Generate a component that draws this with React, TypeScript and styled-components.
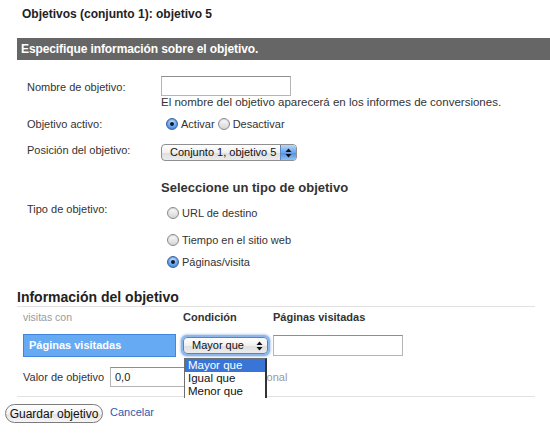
import React from "react";
import styled, { createGlobalStyle, css } from "styled-components";

const Global = createGlobalStyle`
  html, body { margin: 0; padding: 0; background: #fff; }
  body { font-family: "Liberation Sans", Arial, Helvetica, sans-serif; color: #333; font-size: 11px; }
  * { box-sizing: border-box; }
`;

const Page = styled.div`
  width: 550px;
  height: 433px;
  overflow: hidden;
  padding-top: 6px;
`;

const Title = styled.h2`
  margin: 0 0 0 22px;
  font-size: 12px;
  line-height: 16px;
  font-weight: bold;
  color: #222;
`;

const Bar = styled.div`
  margin: 16px 0 0 17px;
  height: 22px;
  line-height: 22px;
  background: #666;
  color: #fff;
  font-weight: bold;
  font-size: 12px;
  padding-left: 4px;
  letter-spacing: -0.1px;
`;

const FieldRow = styled.div<{ $mt: number }>`
  display: flex;
  align-items: flex-start;
  margin: ${(p) => p.$mt}px 0 0 27px;
`;

const Label = styled.div<{ $pt?: number }>`
  width: 134px;
  flex: none;
  line-height: 14px;
  padding-top: ${(p) => p.$pt ?? 0}px;
  font-size: 11px;
  color: #333;
`;

const Content = styled.div`
  display: flex;
  flex-direction: column;
  align-items: flex-start;
`;

const TextInput = styled.div<{ $w: number; $h?: number }>`
  width: ${(p) => p.$w}px;
  height: ${(p) => p.$h ?? 20}px;
  border: 1px solid #b5b5b5;
  border-top-color: #8e8e8e;
  background: #fff;
  font-size: 11px;
  line-height: 18px;
  padding-left: 4px;
  color: #222;
`;

const Hint = styled.div`
  line-height: 12px;
  font-size: 11.5px;
  color: #333;
`;

const RadioLine = styled.div<{ $mt?: number; $ml?: number }>`
  display: flex;
  align-items: center;
  margin-top: ${(p) => p.$mt ?? 0}px;
  margin-left: ${(p) => p.$ml ?? 0}px;
  line-height: 14px;
  font-size: 11px;
  color: #333;
`;

const RadioItem = styled.label`
  display: inline-flex;
  align-items: center;
  margin-right: 3px;
`;

const RadioDot = styled.span<{ $on?: boolean }>`
  display: inline-block;
  position: relative;
  width: 12px;
  height: 12px;
  border-radius: 50%;
  margin-right: 3px;
  border: 1px solid #8a8a8a;
  background: linear-gradient(#fdfdfd, #d4d4d4);
  box-shadow: inset 0 1px 1px rgba(0, 0, 0, 0.15);
  ${(p) =>
    p.$on &&
    css`
      border-color: #3a62a0;
      background: radial-gradient(circle at 50% 30%, #c8e0fb, #6aa6ea 55%, #2f72cf);
      &::after {
        content: "";
        position: absolute;
        left: 3px;
        top: 3px;
        width: 4px;
        height: 4px;
        border-radius: 50%;
        background: #0d1c33;
      }
    `}
`;

const SelectBox = styled.div<{ $w: number; $focus?: boolean; $mt?: number }>`
  position: relative;
  display: flex;
  align-items: center;
  width: ${(p) => p.$w}px;
  height: 17px;
  margin-top: ${(p) => p.$mt ?? 0}px;
  border: 1px solid #8f8f8f;
  border-radius: 4px;
  background: linear-gradient(#ffffff, #f0f0f0 50%, #dedede 51%, #ececec);
  font-size: 11px;
  color: #111;
  ${(p) =>
    p.$focus &&
    css`
      box-shadow: 0 0 0 2px #8db6ea, 0 0 2px 3px rgba(120, 165, 230, 0.5);
      border-color: #5b82bb;
    `}
`;

const SelectText = styled.span`
  flex: 1;
  padding-left: 8px;
  line-height: 15px;
  white-space: nowrap;
`;

const SelectArrows = styled.span<{ $blue?: boolean }>`
  width: 16px;
  height: 15px;
  flex: none;
  display: flex;
  align-items: center;
  justify-content: center;
  border-radius: 0 3px 3px 0;
  border-left: 1px solid ${(p) => (p.$blue ? "#5d87c4" : "transparent")};
  background: ${(p) =>
    p.$blue ? "linear-gradient(#b9d6f8, #6ba5ec 50%, #4a8ee6 51%, #8ec1f5)" : "transparent"};
`;

const SectionHeading = styled.div`
  margin: 19px 0 0 161px;
  font-size: 13px;
  line-height: 16px;
  font-weight: bold;
  color: #333;
`;

const InfoHeading = styled.div`
  margin: 20px 15px 0 17px;
  font-size: 14px;
  line-height: 17px;
  font-weight: bold;
  color: #222;
  border-bottom: 1px solid #e2e2e2;
`;

const CondGrid = styled.div`
  display: grid;
  grid-template-columns: 160px 90px 1fr;
  margin: 3px 0 0 23px;
  align-items: center;
`;

const ColHead = styled.div<{ $muted?: boolean }>`
  line-height: 14px;
  font-size: ${(p) => (p.$muted ? 10.5 : 11)}px;
  font-weight: ${(p) => (p.$muted ? "normal" : "bold")};
  color: ${(p) => (p.$muted ? "#9a9a9a" : "#333")};
`;

const MetricBox = styled.div`
  margin-top: 10px;
  width: 153px;
  height: 23px;
  line-height: 21px;
  background: #66aaf3;
  border: 1px solid #3f86dc;
  color: #fff;
  font-weight: bold;
  font-size: 11px;
  padding-left: 5px;
`;

const CellWrap = styled.div`
  margin-top: 10px;
  position: relative;
`;

const Dropdown = styled.ul`
  position: absolute;
  left: 1px;
  top: 21px;
  width: 83px;
  height: 40px;
  margin: 0;
  padding: 0;
  list-style: none;
  background: #fff;
  border: 1px solid #6f6f6f;
  border-bottom: none;
  border-right: 2px solid #333;
  overflow: hidden;
  z-index: 2;
  font-size: 11.5px;
`;

const DropItem = styled.li<{ $active?: boolean }>`
  height: 13px;
  line-height: 13px;
  padding-left: 3px;
  color: ${(p) => (p.$active ? "#fff" : "#111")};
  background: ${(p) => (p.$active ? "#3875d7" : "transparent")};
`;

const ValueRow = styled.div`
  display: flex;
  align-items: center;
  margin: 10px 15px 0 23px;
  padding-bottom: 9px;
`;

const ValueLabel = styled.span`
  width: 87px;
  font-size: 11px;
  color: #333;
`;

const Optional = styled.span`
  margin-left: 44px;
  font-size: 11px;
  color: #999;
`;

const Divider = styled.div`
  margin: 0 15px 0 17px;
  border-top: 1px solid #e2e2e2;
`;

const Actions = styled.div`
  display: flex;
  align-items: center;
  margin: 7px 0 0 5px;
`;

const SaveButton = styled.button`
  width: 98px;
  height: 19px;
  padding: 0;
  border: 1px solid #7b7b7b;
  border-radius: 10px;
  background: linear-gradient(#ffffff, #f3f3f3 50%, #e2e2e2 51%, #f6f6f6);
  font-family: "Liberation Sans", Arial, sans-serif;
  font-size: 12px;
  color: #111;
`;

const CancelLink = styled.a`
  margin-left: 7px;
  margin-top: -3px;
  font-size: 11px;
  color: #2a5db0;
  text-decoration: none;
`;

const Arrows = ({ color = "#111" }: { color?: string }) => (
  <svg width="7" height="10" viewBox="0 0 7 10">
    <path d="M3.5 0.5 L6.5 4 L0.5 4 Z" fill={color} />
    <path d="M3.5 9.5 L6.5 6 L0.5 6 Z" fill={color} />
  </svg>
);

export default function App() {
  return (
    <>
      <Global />
      <Page>
        <Title>Objetivos (conjunto 1): objetivo 5</Title>
        <Bar>Especifique información sobre el objetivo.</Bar>

        <FieldRow $mt={16}>
          <Label $pt={4}>Nombre de objetivo:</Label>
          <Content>
            <TextInput $w={130} />
            <Hint>El nombre del objetivo aparecerá en los informes de conversiones.</Hint>
          </Content>
        </FieldRow>

        <FieldRow $mt={9}>
          <Label>Objetivo activo:</Label>
          <RadioLine $ml={5}>
            <RadioItem>
              <RadioDot $on />
              Activar
            </RadioItem>
            <RadioItem>
              <RadioDot />
              Desactivar
            </RadioItem>
          </RadioLine>
        </FieldRow>

        <FieldRow $mt={12}>
          <Label>Posición del objetivo:</Label>
          <SelectBox $w={136} $mt={1}>
            <SelectText>Conjunto 1, objetivo 5</SelectText>
            <SelectArrows $blue>
              <Arrows />
            </SelectArrows>
          </SelectBox>
        </FieldRow>

        <SectionHeading>Seleccione un tipo de objetivo</SectionHeading>

        <FieldRow $mt={6}>
          <Label>Tipo de objetivo:</Label>
          <Content>
            <RadioLine $mt={4} $ml={6}>
              <RadioItem>
                <RadioDot />
                URL de destino
              </RadioItem>
            </RadioLine>
            <RadioLine $mt={13} $ml={6}>
              <RadioItem>
                <RadioDot />
                Tiempo en el sitio web
              </RadioItem>
            </RadioLine>
            <RadioLine $mt={8} $ml={6}>
              <RadioItem>
                <RadioDot $on />
                Páginas/visita
              </RadioItem>
            </RadioLine>
          </Content>
        </FieldRow>

        <InfoHeading>Información del objetivo</InfoHeading>

        <CondGrid>
          <ColHead $muted>visitas con</ColHead>
          <ColHead>Condición</ColHead>
          <ColHead>Páginas visitadas</ColHead>

          <MetricBox>Páginas visitadas</MetricBox>
          <CellWrap>
            <SelectBox $w={85} $focus>
              <SelectText>Mayor que</SelectText>
              <SelectArrows>
                <Arrows />
              </SelectArrows>
            </SelectBox>
            <Dropdown>
              <DropItem $active>Mayor que</DropItem>
              <DropItem>Igual que</DropItem>
              <DropItem>Menor que</DropItem>
            </Dropdown>
          </CellWrap>
          <CellWrap>
            <TextInput $w={130} $h={21} />
          </CellWrap>
        </CondGrid>

        <ValueRow>
          <ValueLabel>Valor de objetivo</ValueLabel>
          <TextInput $w={90}>0,0</TextInput>
          <Optional>Opcional</Optional>
        </ValueRow>
        <Divider />

        <Actions>
          <SaveButton>Guardar objetivo</SaveButton>
          <CancelLink href="#">Cancelar</CancelLink>
        </Actions>
      </Page>
    </>
  );
}
